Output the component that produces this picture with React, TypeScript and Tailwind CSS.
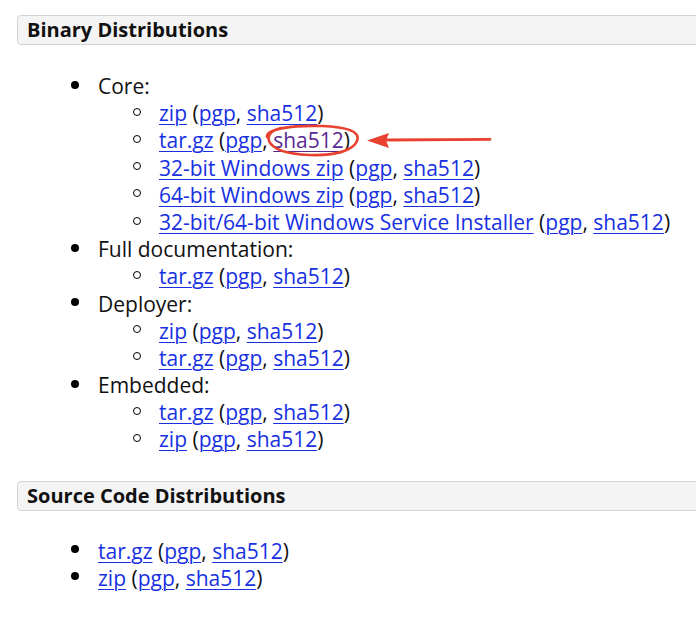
import React from "react";

type Item = { level: 1 | 2; content: React.ReactNode };

const A: React.FC<{ children: React.ReactNode; visited?: boolean }> = ({ children, visited }) => (
  <a
    href="#"
    className={
      visited
        ? "text-[#5a2a93] underline underline-offset-[3px] decoration-1"
        : "text-[#1630e2] underline underline-offset-[3px] decoration-1"
    }
  >
    {children}
  </a>
);

const dl = (name: string, visitedSha = false) => (
  <>
    <A>{name}</A> (<A>pgp</A>, <A visited={visitedSha}>sha512</A>)
  </>
);

const binary: Item[] = [
  { level: 1, content: "Core:" },
  { level: 2, content: dl("zip") },
  { level: 2, content: dl("tar.gz", true) },
  { level: 2, content: dl("32-bit Windows zip") },
  { level: 2, content: dl("64-bit Windows zip") },
  { level: 2, content: dl("32-bit/64-bit Windows Service Installer") },
  { level: 1, content: "Full documentation:" },
  { level: 2, content: dl("tar.gz") },
  { level: 1, content: "Deployer:" },
  { level: 2, content: dl("zip") },
  { level: 2, content: dl("tar.gz") },
  { level: 1, content: "Embedded:" },
  { level: 2, content: dl("tar.gz") },
  { level: 2, content: dl("zip") },
];

const source: Item[] = [
  { level: 1, content: dl("tar.gz") },
  { level: 1, content: dl("zip") },
];

const Row: React.FC<{ item: Item }> = ({ item }) =>
  item.level === 1 ? (
    <div className="flex items-center h-[27.2px] pl-[54px] whitespace-nowrap">
      <span className="w-[8px] h-[8px] rounded-full bg-black -mt-[4px] shrink-0" />
      <span className="ml-[19px]">{item.content}</span>
    </div>
  ) : (
    <div className="flex items-center h-[27.2px] pl-[116px] whitespace-nowrap">
      <span className="w-[8px] h-[8px] rounded-full border-[1.6px] border-black -mt-[4px] shrink-0" />
      <span className="ml-[18px]">{item.content}</span>
    </div>
  );

const Header: React.FC<{ title: string }> = ({ title }) => (
  <div className="h-[30px] mr-[-20px] flex items-center pl-[9px] bg-[#f4f4f4] border border-[#d2d2d2] rounded-[4px] font-bold text-[20px] text-[#111]">
    {title}
  </div>
);

export default function App() {
  return (
    <div
      className="relative w-[696px] h-[624px] overflow-hidden bg-white text-[21px] leading-[27.2px] text-[#111] pt-[15px] pl-[17px]"
      style={{ fontFamily: '"Open Sans", "Noto Sans", sans-serif' }}
    >
      <Header title="Binary Distributions" />
      <div className="mt-[28px] mb-[27px]">
        {binary.map((it, i) => (
          <Row key={i} item={it} />
        ))}
      </div>
      <Header title="Source Code Distributions" />
      <div className="mt-[27px]">
        {source.map((it, i) => (
          <Row key={i} item={it} />
        ))}
      </div>

      {/* annotation */}
      <svg className="absolute inset-0 pointer-events-none" width="696" height="624" viewBox="0 0 696 624">
        <path
          d="M267 137 C266 129 292 125 322 126 C346 127 361 131 357 141 C353 151 334 156 309 155 C286 154 273 150 269 141 C267 134 273 130 281 128"
          fill="none"
          stroke="#e8412f"
          strokeWidth="2.6"
          strokeLinecap="round"
        />
        <line x1="384" y1="140" x2="490" y2="139.3" stroke="#e8412f" strokeWidth="2.8" strokeLinecap="round" />
        <polygon points="367,140.5 389,133 386,140.5 389,148" fill="#e8412f" />
      </svg>
    </div>
  );
}
